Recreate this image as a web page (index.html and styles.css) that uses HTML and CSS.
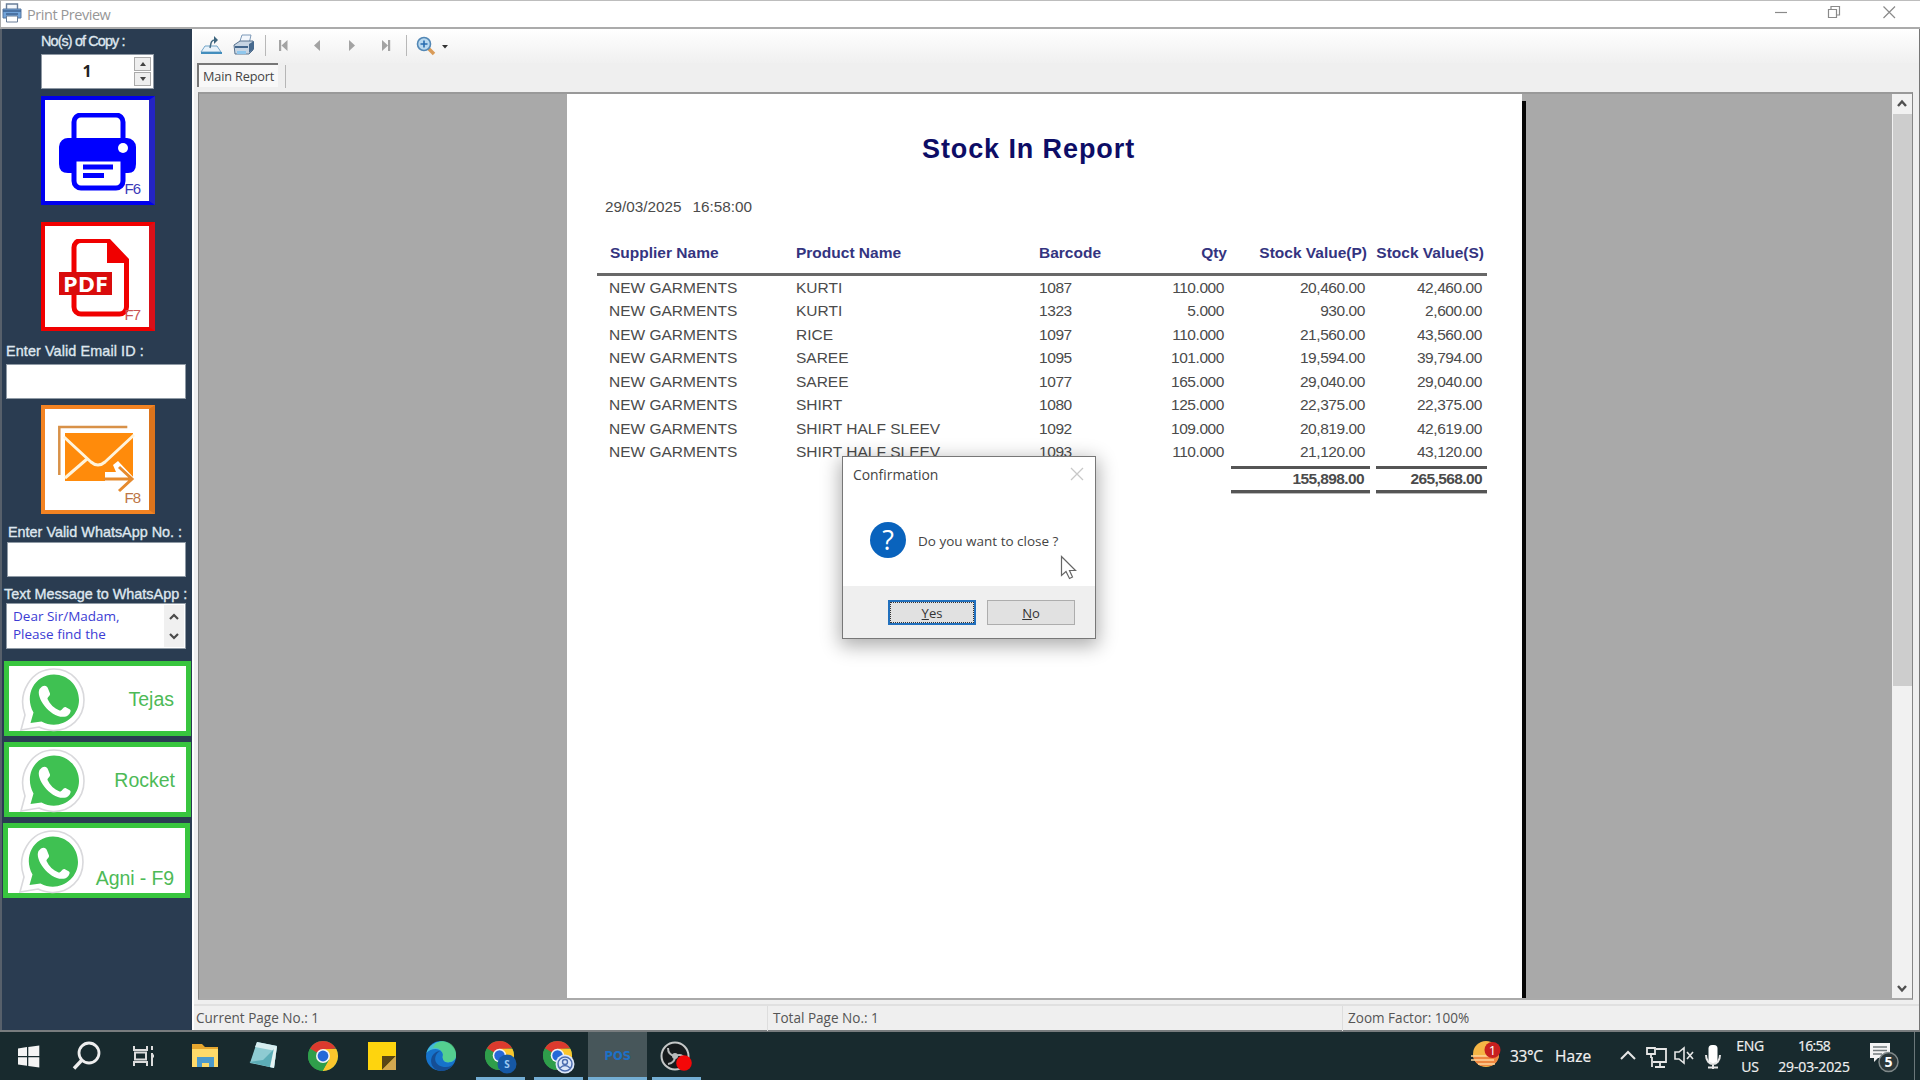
FILE: index.html
```
<!DOCTYPE html>
<html lang="en">
<head>
<meta charset="utf-8">
<title>Print Preview</title>
<link rel="stylesheet" href="styles.css">
</head>
<body>
<svg class="defs" width="0" height="0" aria-hidden="true">
  <defs>
    <symbol id="chrome" viewBox="0 0 32 32">
      <circle cx="16" cy="16" r="15" fill="#2f9e4b"/>
      <path d="M16 16 3 8.500A15 15 0 0 1 29 8.500L22.500 9Z" fill="#dc3a2e"/>
      <path d="M16 9H29.300A15 15 0 0 1 15.500 31L22.100 19.500Z" fill="#fbc62d"/>
      <path d="M3 8.500 9.900 19.500 16 23 22 19.500 15.500 31A15 15 0 0 1 3 8.500Z" fill="#2f9e4b"/>
      <circle cx="16" cy="16" r="7" fill="#f4f4f4"/>
      <circle cx="16" cy="16" r="5.400" fill="#2568d8"/>
    </symbol>
    <symbol id="whatsapp" viewBox="0 0 66 66">
      <path d="M1 64 5 49C-3 27 11 3 34 3 51 3 64 17 64 34 64 52 50 65 33 64.500 27 64 23 63 19 61Z" fill="#fff" stroke="#d9d9dc" stroke-width="1.600"/>
      <path d="M10.500 57 13.500 46.500C4 29 14 9 34 8.500 48 8.500 59 20 59 34 59 52 39 65 21.500 55.500Z" fill="#3fc152"/>
      <path d="M22 20.500C25 19 27 20 28 22.500L30 27.500C30.500 30 27 31 27.500 33 30 38.500 34 42 39.500 44.500 42 45 43 40.500 45.500 41L50 43.500C52 45 49 49.500 46 50.500 32 54 15 32 19.500 23Z" fill="#fff"/>
    </symbol>
  </defs>
</svg>
<div class="window">
  <header class="titlebar">
    <svg class="app-icon" viewBox="0 0 20 20"><path d="M4.500 7V1h11v6" fill="#f4f8fc" stroke="#687d98" stroke-width="1.400"/><path d="M1 6h18v9H1z" fill="#71a3d9" stroke="#57779f"/><path d="M1 8h18M4 11h12" stroke="#3f6493" stroke-width="1.500"/><path d="M4.500 13h11v6h-11z" fill="#fff" stroke="#687d98"/></svg>
    <h1 class="caption">Print Preview</h1>
    <svg class="win-controls" viewBox="0 0 144 26" fill="none" stroke="#8a8a8a" stroke-width="1.200"><path d="M11 12.500h12"/><path d="M64.500 9.500h8v8h-8zM67 9V6.500h8.500V15H73"/><path d="m119.500 6.500 11.500 11.500M131 6.500 119.500 18"/></svg>
  </header>
  <div class="body">
    <aside class="sidebar">
      <label class="side-label copies-label">No(s) of Copy :</label>
      <div class="copies"><span class="copies-value">1</span><span class="spinner"><i class="spin up"></i><i class="spin down"></i></span></div>
      <button class="action print">
        <svg viewBox="0 0 78 78"><path d="M15 26V9a7 7 0 0 1 7-7h35a7 7 0 0 1 7 7v17" fill="none" stroke="#00f" stroke-width="5"/><path d="M10 25h58a9 9 0 0 1 9 9v17q0 9-8 9H9q-9 0-9-9V34a9 9 0 0 1 10-9z" fill="#00f"/><path d="M15 46h49v22a7 7 0 0 1-7 7H22a7 7 0 0 1-7-7z" fill="#fff" stroke="#00f" stroke-width="5"/><path d="M24 54h30M24 62.500h21" stroke="#00f" stroke-width="5"/><circle cx="64" cy="35" r="5" fill="#fff"/></svg>
        <span class="fkey">F6</span>
      </button>
      <button class="action pdf">
        <svg viewBox="0 0 72 78"><path d="M15 8.500a7 7 0 0 1 7-7h27L67.500 21v47a7 7 0 0 1-7 7H22a7 7 0 0 1-7-7z" fill="#fff" stroke="#f00000" stroke-width="5"/><path d="M48 0 70 21v3H48z" fill="#f00000"/><path d="M0 33h53v23H0z" fill="#d90c0c"/><text x="4" y="52.500" textLength="45" lengthAdjust="spacingAndGlyphs" class="pdf-text">PDF</text></svg>
        <span class="fkey">F7</span>
      </button>
      <label class="side-label email-label">Enter Valid Email ID :</label>
      <div class="field email"></div>
      <button class="action mail">
        <svg viewBox="0 0 78 68"><path d="M1.300 50V2h68" fill="none" stroke="#d89148" stroke-width="2.500"/><path d="M7 8h68v48H7z" fill="#ff8b0b"/><path d="m6 12 27 25q7 6 14 0l29-27M7 53l22-19" fill="none" stroke="#fff4dc" stroke-width="3"/><path d="M47 47h11l-3-7 5-4 18 19-6 12H55l4-9H47z" fill="#fff"/><path d="M46 54h27M61 42l13 12-13 12" fill="none" stroke="#e68a2d" stroke-width="3"/></svg>
        <span class="fkey">F8</span>
      </button>
      <label class="side-label phone-label">Enter Valid WhatsApp No. :</label>
      <div class="field phone"></div>
      <label class="side-label message-label">Text Message to WhatsApp :</label>
      <div class="message"><p>Dear Sir/Madam,<br>Please find the</p>
        <svg viewBox="0 0 20 42" fill="none" stroke="#4a4a4a" stroke-width="2.200"><path d="m6 14 4-4 4 4M6 29l4 4 4-4"/></svg></div>
      <button class="wa tejas"><svg><use href="#whatsapp"/></svg><span>Tejas</span></button>
      <button class="wa rocket"><svg><use href="#whatsapp"/></svg><span>Rocket</span></button>
      <button class="wa agni"><svg><use href="#whatsapp"/></svg><span>Agni - F9</span></button>
    </aside>
    <main class="preview">
      <div class="toolbar">
        <svg class="tools" viewBox="0 0 260 34">
          <path d="m5 17-4 6h20l-4-6z" fill="#e8f2fa" stroke="#71a5c9"/><path d="M1 24h21" stroke="#438ebd" stroke-width="2"/><path d="M10 19c1-5 1-8 5-8" fill="none" stroke="#466d86" stroke-width="1.500"/><path d="m14 7 4 4-4 4z" fill="#3d657e"/>
          <path d="m39 15 3-9h9l-2 9" fill="#f3f7fc" stroke="#7c99b8"/><path d="m34 16 6-4h13v9l-4 4H35z" fill="#c7d5e3" stroke="#58728e"/><path d="m49 15 5-3v8l-5 4z" fill="#476a8e"/><path d="M35 18h13" stroke="#44678d" stroke-width="2"/><path d="M37 22h9v3h-9z" fill="#8fc7ed"/>
          <path d="M65.500 6v21M206.500 6v21" stroke="#b8b8b8"/>
          <path d="M79 11h2.200v11H79zM87.500 11v11L81.500 16.500zM120 11v11l-6-5.500zM149 11v11l6-5.500zM182 11v11l6-5.500zM188 11h2.200v11H188z" fill="#a3a3a3"/>
          <path d="m228 19 6 6" stroke="#d99b58" stroke-width="3.500"/><circle cx="224" cy="15" r="6.500" fill="#b9d9f0" stroke="#5287b5" stroke-width="1.600"/><path d="M220.500 15h7M224 11.500v7" stroke="#276cb0" stroke-width="1.600"/><path d="M242 16h6l-3 3.500z" fill="#333"/>
        </svg>
      </div>
      <div class="tabs"><span class="tab">Main Report</span></div>
      <div class="viewer">
        <div class="canvas">
          <article class="page">
            <h2 class="report-title">Stock In Report</h2>
            <p class="stamp"><span>29/03/2025</span><span>16:58:00</span></p>
            <div class="row head"><span>Supplier Name</span><span>Product Name</span><span>Barcode</span><span class="num">Qty</span><span class="num">Stock Value(P)</span><span class="num">Stock Value(S)</span></div>
            <div class="rows">
              <div class="row"><span>NEW GARMENTS</span><span>KURTI</span><span class="d">1087</span><span class="num d">110.000</span><span class="num d">20,460.00</span><span class="num d">42,460.00</span></div>
              <div class="row"><span>NEW GARMENTS</span><span>KURTI</span><span class="d">1323</span><span class="num d">5.000</span><span class="num d">930.00</span><span class="num d">2,600.00</span></div>
              <div class="row"><span>NEW GARMENTS</span><span>RICE</span><span class="d">1097</span><span class="num d">110.000</span><span class="num d">21,560.00</span><span class="num d">43,560.00</span></div>
              <div class="row"><span>NEW GARMENTS</span><span>SAREE</span><span class="d">1095</span><span class="num d">101.000</span><span class="num d">19,594.00</span><span class="num d">39,794.00</span></div>
              <div class="row"><span>NEW GARMENTS</span><span>SAREE</span><span class="d">1077</span><span class="num d">165.000</span><span class="num d">29,040.00</span><span class="num d">29,040.00</span></div>
              <div class="row"><span>NEW GARMENTS</span><span>SHIRT</span><span class="d">1080</span><span class="num d">125.000</span><span class="num d">22,375.00</span><span class="num d">22,375.00</span></div>
              <div class="row"><span>NEW GARMENTS</span><span>SHIRT HALF SLEEV</span><span class="d">1092</span><span class="num d">109.000</span><span class="num d">20,819.00</span><span class="num d">42,619.00</span></div>
              <div class="row"><span>NEW GARMENTS</span><span>SHIRT HALF SLEEV</span><span class="d">1093</span><span class="num d">110.000</span><span class="num d">21,120.00</span><span class="num d">43,120.00</span></div>
            </div>
            <div class="totals"><span class="total-p">155,898.00</span><span class="total-s">265,568.00</span></div>
          </article>
          <div class="page-edge"></div>
        </div>
        <div class="scrollbar">
          <svg viewBox="0 0 20 20" fill="none" stroke="#505050" stroke-width="2.400"><path d="m6 12 4-4.500 4 4.500"/></svg>
          <div class="thumb"></div>
          <svg viewBox="0 0 20 20" fill="none" stroke="#505050" stroke-width="2.400"><path d="m6 8 4 4.500L14 8"/></svg>
        </div>
      </div>
      <footer class="status"><span>Current Page No.: 1</span><span>Total Page No.: 1</span><span>Zoom Factor: 100%</span></footer>
    </main>
  </div>
  <nav class="taskbar">
    <div class="sys"><svg viewBox="0 0 58 50"><path d="m18 17.500 9-1.400v9H18zM28.300 16l11-1.500v10.600h-11zM18 26.300h9v8.500l-9-1.200zM28.300 26.300h11v10.200l-11-1.500z" fill="#f4f4f4"/></svg></div>
    <div class="sys"><svg viewBox="0 0 58 50"><circle cx="31" cy="22" r="10" fill="none" stroke="#eee" stroke-width="2.800"/><path d="m24 29-8 8.500" stroke="#eee" stroke-width="3.400"/></svg></div>
    <div class="sys"><svg viewBox="0 0 58 50" fill="none" stroke="#ddd" stroke-width="2"><path d="M19 15v4h13v-4M19 35v-4h13v4M20 21.500h11v7H20zM37 15v4M37 22v13"/><path d="M36 25h3" stroke-width="3"/></svg></div>
    <div class="task first"><svg viewBox="0 0 58 50"><path d="M16 13h10l3 3h13v20H16z" fill="#e7a72f"/><path d="M16 18h26v18H16z" fill="#ffda69"/><path d="M21 26h17v10h-5v-4h-7v4h-5z" fill="#4d9acb"/></svg></div>
    <div class="task"><svg viewBox="0 0 58 50"><path d="m22 11 20 4-3 22-24-5z" fill="#8ecbd2"/><path d="m22 11 20 4-1 5-21-4z" fill="#d7edf0"/><path d="m14 31 25 6 3-22-14 14z" fill="#5cadb7"/><path d="m39 37 3-22-3 2-4 19z" fill="#e7f3f3"/></svg></div>
    <div class="task"><svg viewBox="0 0 58 50"><use href="#chrome" x="13" y="9" width="32" height="32"/></svg></div>
    <div class="task"><svg viewBox="0 0 58 50"><path d="M15 11h28v28H15z" fill="#fed40e"/><path d="M43 25H29v14z" fill="#584615"/><path d="M43 25 29 39h14z" fill="#d2a850"/></svg></div>
    <div class="task"><svg viewBox="0 0 58 50"><circle cx="29" cy="25" r="15" fill="#1673cb"/><path d="M14.500 22A15 15 0 0 1 44 24c1 8-12 10-13 4-1-3 1-4-1-7-4-5-12-3-15.500 1z" fill="#46bcd4"/><path d="M31 10c9 1 14 8 13 15-1 7-12 8-13 3-1-3 1-4-1-7-2-4-6-5-9-4 2-4 5-7 10-7z" fill="#59d67a" opacity=".75"/><path d="M28 20c-8 5-6 16 6 16 4 0 7-2 8-4-4 8-13 10-19 6-7-6-4-17 5-18z" fill="#154e95"/></svg></div>
    <div class="task running"><svg viewBox="0 0 58 50"><use href="#chrome" x="13" y="9" width="31" height="31"/><circle cx="36" cy="33" r="9.500" fill="#1658a4"/><text x="36" y="37" text-anchor="middle" class="badge-s">S</text></svg></div>
    <div class="task running"><svg viewBox="0 0 58 50"><use href="#chrome" x="13" y="9" width="31" height="31"/><circle cx="36" cy="33" r="9.500" fill="#dce7fa"/><circle cx="36" cy="33" r="7" fill="none" stroke="#4d6eb0" stroke-width="1.500"/><circle cx="36" cy="31" r="2.500" fill="none" stroke="#4d6eb0" stroke-width="1.400"/><path d="M31 37q5-5 10 0" fill="none" stroke="#4d6eb0" stroke-width="1.500"/></svg></div>
    <div class="task running active"><span class="pos">POS</span></div>
    <div class="task running"><svg viewBox="0 0 58 50"><circle cx="28" cy="25" r="13.500" fill="#161b1d" stroke="#c5c8c8" stroke-width="2"/><circle cx="28" cy="25" r="3" fill="#b7baba"/><path d="M28 25q-7-1-7-8M28 25q7-3 10 3M28 25q0 7-7 8" fill="none" stroke="#b7baba" stroke-width="2"/><circle cx="37" cy="32" r="7.800" fill="#f40808"/></svg></div>
    <div class="tray">
      <svg class="weather" viewBox="0 0 34 34"><circle cx="17" cy="17" r="13" fill="#f5b545"/><path d="M4 19h26a13 13 0 0 1-8 10H12a13 13 0 0 1-8-10z" fill="#ef8740"/><path d="M2 19h24M2 23h23M9 27h17" stroke="#ffd69a" stroke-width="1.600"/><circle cx="23.500" cy="13" r="8" fill="#c71f1f"/><text x="23.500" y="17.500" text-anchor="middle" class="badge-1">1</text></svg>
      <span class="temp">33°C</span><span class="haze">Haze</span>
      <svg class="tray-icons" viewBox="0 0 110 34" fill="none" stroke="#e6e6e6" stroke-width="2"><path d="m2 21 7-7 7 7"/><path d="M37 11h10v13H34M41 24v5M36 29h10M33 19v10" stroke-width="1.800"/><path d="M28 10h8v6h-8zM32 16v4" stroke-width="1.800"/><path d="M56 14h4l5-4v15l-5-4h-4zM68 14l6 7M74 14l-6 7" stroke-width="1.600"/><path d="M87 17c0 12 14 12 14 0M94 26v5M89 29.500h10" stroke-width="2"/><rect x="89.500" y="7" width="9" height="18" rx="3.500" fill="#fff" stroke="none"/></svg>
      <div class="stack lang"><span>ENG</span><span>US</span></div>
      <div class="stack clock"><span>16:58</span><span class="date">29-03-2025</span></div>
      <svg class="notif" viewBox="0 0 36 36"><path d="M3 5h20v15H11l-4 4v-4H3z" fill="#f4f4f4"/><path d="M6 9h14M6 12.500h14M6 16h9" stroke="#737b7d" stroke-width="1.300"/><circle cx="21.500" cy="24" r="9.500" fill="#2b3739" stroke="#7f8889" stroke-width="1.500"/><text x="21.500" y="29" text-anchor="middle" class="badge-5">5</text></svg>
      <i class="desktop-edge"></i>
    </div>
  </nav>
</div>
<section class="dialog">
  <div class="dialog-top"><span class="dialog-title">Confirmation</span><svg viewBox="0 0 14 14"><path d="m1 1 12 12M13 1 1 13" stroke="#c8c8c8" stroke-width="1.300"/></svg></div>
  <div class="dialog-body"><span class="question">?</span><span class="ask">Do you want to close ?</span></div>
  <div class="dialog-foot"><button class="btn yes"><u>Y</u>es</button><button class="btn"><u>N</u>o</button></div>
</section>
<svg class="cursor" viewBox="0 0 18 25"><path d="M1.500 1.500v19l4.500-4 3.500 7 3-1.500-3-6.500h6z" fill="#fff" stroke="#666" stroke-width="1.200"/></svg>
</body>
</html>
```
FILE: styles.css
```
* { box-sizing: border-box; }
body { margin: 0; overflow: hidden; font-family: "Open Sans", "Noto Sans", sans-serif; color: #444; }
h1, h2, p { margin: 0; font-weight: 400; }
button { padding: 0; font: inherit; border-radius: 0; }
.defs { display: none; }
.window { width: 1920px; height: 1080px; display: flex; flex-direction: column; white-space: nowrap; }

/* title bar */
.titlebar { height: 29px; flex: none; display: flex; align-items: center; background: #fff; border-top: 1px solid #bdbdbd; border-bottom: 2px solid #ababab; border-left: 1px solid #aaa; }
.app-icon { width: 20px; height: 20px; margin: 0 0 2px 1px; }
.caption { margin: 1px 0 0 5px; font-size: 14.500px; letter-spacing: -.45px; color: #979797; }
.win-controls { width: 144px; height: 26px; margin: 0 12px 2px auto; }

.body { height: 1003px; flex: none; display: flex; background: #eee; border-right: 1px solid #777; border-bottom: 2px solid #787c7e; }

/* sidebar */
.sidebar { width: 192px; flex: none; display: flex; flex-direction: column; align-items: flex-start; background: #2a3c51; border-left: 2px solid #57606b; }
.side-label { height: 16px; flex: none; font: 14.400px/16px "Liberation Sans", sans-serif; color: #dfe7ef; -webkit-text-stroke: .35px #dfe7ef; }
.copies-label { margin: 4px 0 0 39px; letter-spacing: -.88px; }
.copies { margin: 5px 0 0 39px; width: 113px; height: 35px; flex: none; display: flex; background: #fff; border: 1px solid #8e98a3; padding: 2px; }
.copies-value { flex: 1; text-align: center; padding-right: 4px; font: 700 16px/28px "Open Sans", sans-serif; color: #222; }
.spinner { width: 17px; display: flex; flex-direction: column; gap: 1px; }
.spin { flex: 1; background: #eee; border: 1px solid #aaa; display: flex; align-items: center; justify-content: center; }
.spin::after { content: ""; border: 3px solid transparent; }
.spin.up::after { border-bottom: 4px solid #444; border-top: 0; }
.spin.down::after { border-top: 4px solid #444; border-bottom: 0; }
.action { position: relative; flex: none; display: flex; align-items: flex-start; width: 114px; height: 109px; margin-left: 39px; background: #fff; border: 4px solid; }
.action svg { display: block; width: 78px; height: 78px; }
.print { margin-top: 7px; border-color: #0000ee; border-right: 6px solid #2424c4; }
.print svg { margin: 13px 0 0 14px; }
.pdf { margin-top: 17px; border-color: #f00000; border-right: 6px solid #d91019; }
.pdf svg { margin: 13px 0 0 14px; width: 72px; }
.pdf-text { font: 700 21px "Open Sans", sans-serif; fill: #fff; }
.mail { margin-top: 6px; border-color: #f38322; border-right: 6px solid #dc741c; }
.mail svg { margin: 16px 0 0 13px; width: 78px; height: 68px; }
.fkey { position: absolute; right: 9px; bottom: 4px; font: 15px/17px "Liberation Sans", sans-serif; letter-spacing: -1px; }
.print .fkey { color: #3a3ab8; }
.pdf .fkey { color: #ca5454; }
.mail .fkey { color: #bc7544; }
.email-label { margin: 12px 0 0 4px; letter-spacing: .1px; }
.field { flex: none; background: #fff; border: 1px solid #8f9aa5; width: 180px; height: 35px; }
.email { margin: 5px 0 0 4px; }
.phone-label { margin: 10px 0 0 6px; }
.phone { margin: 2px 0 0 5px; width: 179px; }
.message-label { margin: 9px 0 0 2px; }
.message { flex: none; width: 180px; height: 46px; margin: 1px 0 0 4px; display: flex; justify-content: space-between; background: #fff; border: 1px solid #8f9aa5; padding: 1px; }
.message p { padding: 2px 0 0 5px; font-size: 13.500px; line-height: 18px; color: #3c3cd4; }
.message svg { width: 20px; height: 42px; background: #f0f0f0; }
.wa { flex: none; display: flex; align-items: center; width: 187px; height: 75px; background: #fff; border: 5px solid #38c53e; font: 19.500px/24px "Liberation Sans", sans-serif; color: #4dba57; }
.wa svg { width: 66px; height: 66px; margin-left: 11px; }
.wa span { margin: 1px 11px 0 auto; }
.tejas { margin: 12px 0 0 2px; }
.tejas span { margin-right: 12px; }
.rocket { margin: 6px 0 0 2px; }
.agni { margin: 6px 0 0 1px; }
.agni span { padding-top: 33px; letter-spacing: -.1px; }

/* report viewer */
.preview { flex: 1; display: flex; flex-direction: column; min-width: 0; background: #efefef; border-left: 2px solid #fff; }
.toolbar { height: 34px; flex: none; background: linear-gradient(#fff, #f0f0f0); }
.tools { display: block; width: 260px; height: 34px; margin-left: 6px; }
.tabs { height: 29px; flex: none; display: flex; padding-left: 3px; }
.tab { position: relative; height: 24px; width: 81px; font-size: 12.700px; line-height: 22px; letter-spacing: -.15px; padding-left: 4px; border-left: 2px solid #777; border-top: 2px solid #777; background: #f8f8f8; }
.tab::after { content: ""; position: absolute; right: -8px; top: 0; width: 1px; height: 23px; background: #b6b6b6; }
.viewer { height: 908px; flex: none; margin: 0 6px 0 4px; display: flex; border: 1px solid #858585; border-top: 2px solid #999; border-bottom: 2px solid #aaa; background: #a9a9a9; }
.canvas { flex: 1; display: flex; padding-left: 368px; }
.page { width: 955px; background: #fff; color: #4b4b4b; font: 15.500px/24px "Liberation Sans", sans-serif; }
.page-edge { width: 4px; margin-top: 7px; background: #050505; }
.report-title { margin: 38px 0 0 355px; font: 700 27px/34px "Liberation Sans", sans-serif; letter-spacing: .9px; color: #0d0d66; }
.stamp { display: flex; gap: 11px; margin: 29px 0 0 38px; font-size: 15.300px; }
.row { display: grid; grid-template-columns: 187px 243px 98px 87px 141px 117px; margin-left: 42px; height: 23.430px; line-height: 23.430px; }
.num { text-align: right; }
.d { letter-spacing: -.43px; }
.head { margin: 22px 35px 0 30px; padding-left: 13px; height: 35px; line-height: 24px; font-weight: 700; color: #34347f; border-bottom: 3px solid #686868; grid-template-columns: 186px 243px 98px 90px 140px 117px; }
.totals { display: flex; justify-content: flex-end; gap: 6px; margin: 3px 35px 0 0; font-weight: 700; letter-spacing: -.6px; }
.totals span { height: 27px; border-top: 3px solid #555; border-bottom: 3px solid #555; line-height: 19px; text-align: right; padding-right: 5px; box-shadow: 0 1px #bbb; }
.total-p { width: 139px; }
.totals .total-p { padding-right: 6px; }
.total-s { width: 111px; }
.scrollbar { width: 20px; display: flex; flex-direction: column; background: #f1f1f1; }
.scrollbar svg { width: 20px; height: 20px; }
.scrollbar svg:last-child { margin-top: auto; }
.thumb { height: 572px; background: #cdcdcd; margin-left: 1px; }
.status { flex: 1; display: flex; margin-top: 4px; border-top: 2px solid #e0e0e0; font-size: 13.550px; line-height: 25px; color: #555; }
.status span { width: 575px; padding-left: 5px; border-left: 1px solid #ddd; }
.status span:first-child { border: 0; padding-left: 2px; width: 573px; }

/* taskbar */
.taskbar { height: 48px; display: flex; background: #182a2e; color: #f0f0f0; }
.taskbar svg { display: block; }
.sys svg, .task svg { width: 58px; height: 50px; margin-top: -1px; }
.sys { width: 57.700px; }
.task { width: 58.900px; flex: none; position: relative; }
.first { margin-left: 3px; }
.running::after { content: ""; position: absolute; left: 5px; bottom: 0; width: 49px; height: 3px; background: #74aed4; }
.active { background: #47565a; text-align: center; }
.active::after { left: 0; width: 100%; }
.pos { font: 700 11.500px/48px "DejaVu Sans", sans-serif; color: #1d70c7; }
.badge-s { font: 700 10px "Open Sans", sans-serif; fill: #9dc9f3; }
.badge-1 { font: 13px "Open Sans", sans-serif; fill: #fff; }
.badge-5 { font: 700 14px "Open Sans", sans-serif; fill: #fff; }
.tray { margin-left: auto; width: 451px; display: flex; align-items: center; font-size: 15.500px; -webkit-text-stroke: .2px #f0f0f0; }
.tray svg { flex: none; -webkit-text-stroke: 0; }
.weather { width: 34px; height: 34px; margin-bottom: 5px; }
.temp { width: 37px; margin-left: 7px; letter-spacing: -.4px; }
.haze { margin-left: 8px; width: 64px; letter-spacing: .1px; }
.tray-icons { width: 110px; height: 34px; margin-bottom: 2px; }
.stack { display: flex; flex-direction: column; align-items: center; font-size: 14px; line-height: 21px; letter-spacing: -.7px; }
.lang { width: 30px; margin-left: 6px; letter-spacing: -.3px; }
.clock { width: 74px; margin-left: 12px; }
.date { letter-spacing: -.15px; }
.notif { width: 36px; height: 36px; margin: 0 0 0 16px; }
.desktop-edge { width: 1px; height: 48px; margin: 0 5px 0 auto; background: #6b777a; }

/* confirmation dialog */
.dialog { position: absolute; left: 842px; top: 456px; width: 254px; height: 183px; display: flex; flex-direction: column; background: #fff; border: 1px solid #777; box-shadow: 0 5px 18px 2px rgba(0,0,0,.32); color: #444; white-space: nowrap; }
.dialog-top { height: 36px; display: flex; justify-content: space-between; padding: 6px 11px 0 10px; font-size: 13.900px; line-height: 24px; }
.dialog-top svg { width: 14px; height: 14px; margin-top: 4px; }
.dialog-body { flex: 1; display: flex; align-items: flex-start; padding: 29px 0 0 27px; }
.question { width: 36px; height: 36px; border-radius: 50%; background: #0963bd; color: #fff; text-align: center; font-size: 27px; line-height: 35px; }
.ask { margin-left: 12px; font-size: 13.500px; line-height: 38px; }
.dialog-foot { height: 52px; display: flex; gap: 11px; padding: 14px 0 0 45px; background: #efefef; }
.btn { width: 88px; height: 25px; background: #e1e1e1; border: 1px solid #adadad; font-size: 13px; color: #333; line-height: 22px; }
.yes { border: 2px solid #2270bd; outline: 1px dotted #333; outline-offset: -3px; line-height: 20px; }
.cursor { position: absolute; left: 1060px; top: 555px; width: 18px; height: 25px; }
```
